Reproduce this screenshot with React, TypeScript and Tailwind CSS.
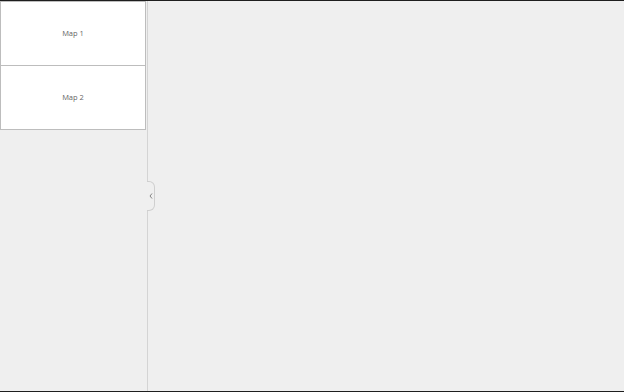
export default function App() {
  const maps = ['Map 1', 'Map 2'];

  return (
    <div
      className="h-[392px] w-[624px] border-y border-[#1e1e1e] bg-[#efefef] flex overflow-hidden antialiased"
      style={{ fontFamily: '"Open Sans", "Liberation Sans", sans-serif' }}
    >
      {/* Sidebar */}
      <div className="relative w-[148px] h-full border-r border-[#d4d4d4] flex flex-col">
        {maps.map((name) => (
          <div
            key={name}
            className="w-[146px] h-[65px] bg-white border border-[#bdbdbd] -mb-px flex items-center justify-center"
          >
            <span className="text-[7.5px] text-[#606060] opacity-95">{name}</span>
          </div>
        ))}

        {/* Collapse tab */}
        <button className="absolute top-[180px] -right-[8px] w-[8px] h-[30px] bg-[#efefef] border border-l-0 border-[#cfcfcf] rounded-r-[6px] flex items-center justify-center">
          <svg width="4" height="6" viewBox="0 0 4 6" fill="none">
            <path d="M3 0.5 L1 3 L3 5.5" stroke="#777" strokeWidth="0.9" />
          </svg>
        </button>
      </div>

      {/* Main area */}
      <div className="flex-1" />
    </div>
  );
}
